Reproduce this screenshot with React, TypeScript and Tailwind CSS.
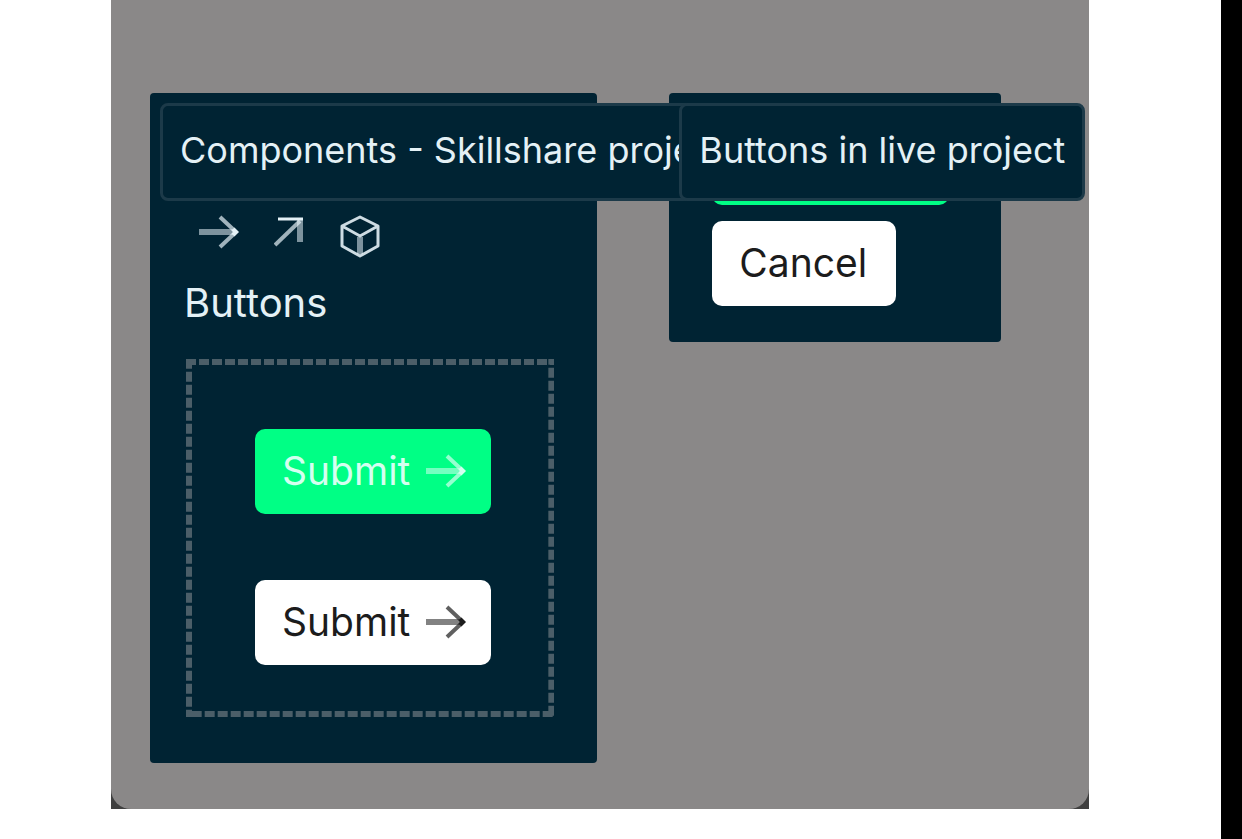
import type { ReactNode } from "react";
import clsx from "clsx";

const ArrowRightIcon = ({ label }: { label?: string }) => (
  <svg
    viewBox="0 0 40 34"
    className="h-[34px] w-10 shrink-0"
    fill="none"
    stroke="currentColor"
    role={label ? "img" : undefined}
    aria-label={label}
    aria-hidden={label ? undefined : true}
  >
    <path d="M0 17H34" strokeWidth="6" opacity="0.55" />
    <path d="M21 2L37 17L21 32" strokeWidth="4" opacity="0.7" />
    <path d="M34 14L37 17L34 20" strokeWidth="4" />
  </svg>
);

const ArrowUpRightIcon = () => (
  <svg
    viewBox="0 0 30 30"
    className="size-[30px]"
    fill="none"
    stroke="currentColor"
    role="img"
    aria-label="Arrow up right"
  >
    <path d="M26 3V25" strokeWidth="6" opacity="0.55" />
    <path d="M1 28L26 4" strokeWidth="4" opacity="0.7" />
    <path d="M4 2H29" strokeWidth="3" />
  </svg>
);

const BoxIcon = () => (
  <svg
    viewBox="0 0 40 44"
    className="h-11 w-10"
    fill="none"
    stroke="currentColor"
    role="img"
    aria-label="Box"
  >
    <path d="M20 22V39" strokeWidth="6" opacity="0.55" />
    <path
      d="M20 2L38 11V31L20 41L2 31V11L20 2ZM2 11L20 21L38 11"
      strokeWidth="3"
      strokeLinejoin="round"
      opacity="0.9"
    />
  </svg>
);

type ButtonProps = {
  children: ReactNode;
  variant?: "primary" | "secondary";
};

const Button = ({ children, variant = "secondary" }: ButtonProps) => (
  <button
    type="button"
    className={clsx(
      "flex min-w-[184px] items-center gap-4 rounded-[10px] pt-[18px] pr-[25px] pb-[19px] pl-[27px] text-[39px] leading-[48px]",
      variant === "primary" ? "bg-[#00ff85] text-[#d5fff0]" : "bg-white text-[#1c1c1c]"
    )}
  >
    {children}
  </button>
);

type FrameProps = {
  title: string;
  className: string;
  children: ReactNode;
};

const Frame = ({ title, className, children }: FrameProps) => (
  <section className={clsx("relative shrink-0 rounded-[4px] bg-[#002333]", className)}>
    {children}
    {/* Title tag floats over its own frame and the frames next to it */}
    <h2 className="absolute top-[10px] left-[10px] z-10 rounded-lg border-3 border-[#1c3a49] bg-[#002333] px-[17px] pt-5 pb-6 text-[36px] leading-[48px] whitespace-nowrap text-[#e4f1f6]">
      {title}
    </h2>
  </section>
);

export default function App() {
  return (
    <div className="flex min-h-screen items-start bg-white pl-[111px] font-['Inter',sans-serif]">
      <div className="flex-1 bg-[#3f3f3f]">
        <main className="flex items-start gap-[72px] rounded-b-[20px] bg-[#8a8888] pt-[93px] pb-[46px] pl-[39px]">
          <Frame title="Components - Skillshare project" className="pt-[122px] pr-[43px] pb-[46px] pl-9">
            <div className="flex items-start pl-[13px] text-[#e4f1f6]">
              <ArrowRightIcon label="Arrow right" />
              <span className="pt-0.5 pr-9 pl-[35px]">
                <ArrowUpRightIcon />
              </span>
              <BoxIcon />
            </div>
            <h3 className="-ml-0.5 pt-5 text-[40px] leading-[48px] text-[#e4f1f6]">Buttons</h3>
            <div className="relative mt-8 flex flex-col gap-[66px] pt-[70px] pr-[63px] pb-[52px] pl-[69px]">
              <svg className="absolute inset-0 size-full text-[#4b5e68]" aria-hidden="true">
                <rect
                  width="100%"
                  height="100%"
                  fill="none"
                  stroke="currentColor"
                  strokeWidth="12"
                  strokeDasharray="10 3"
                />
              </svg>
              <Button variant="primary">
                Submit
                <ArrowRightIcon />
              </Button>
              <Button>
                Submit
                <ArrowRightIcon />
              </Button>
            </div>
          </Frame>

          <Frame
            title="Buttons in live project"
            className="flex w-[332px] flex-col items-start gap-4 pt-[27px] pb-9 pl-[43px]"
          >
            <Button variant="primary">
              Submit
              <ArrowRightIcon />
            </Button>
            <Button>Cancel</Button>
          </Frame>
        </main>
      </div>
      <div className="ml-[132px] w-[21px] shrink-0 self-stretch bg-black" />
    </div>
  );
}
